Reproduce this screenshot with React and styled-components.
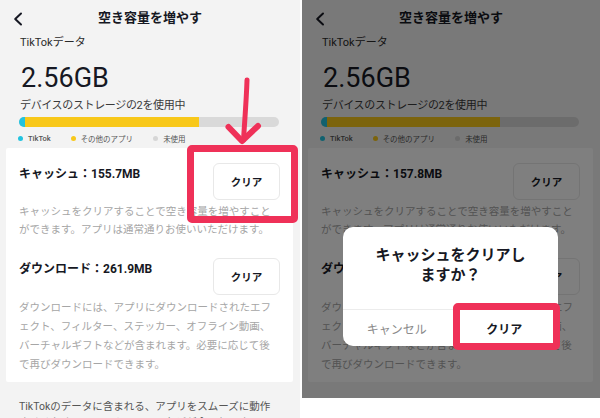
import React from "react";
import styled, { createGlobalStyle } from "styled-components";

const FONT = `Roboto, "Noto Sans CJK JP", sans-serif`;
const RED = "#ef3158";

const Global = createGlobalStyle`
  html, body { margin: 0; padding: 0; background: #fff; }
  body { font-family: ${FONT}; -webkit-font-smoothing: antialiased; }
`;

const Stage = styled.div`
  display: flex;
  align-items: flex-start;
  gap: 2px;
  width: 600px;
  height: 418px;
  overflow: hidden;
  background: #fff;
`;

const Phone = styled.div`
  position: relative;
  flex: none;
  display: flex;
  flex-direction: column;
  width: ${(p) => p.$w}px;
  height: ${(p) => p.$h}px;
  overflow: hidden;
  background: #f3f3f3;
  color: #161823;
  & > * {
    flex-shrink: 0;
  }
`;

const Header = styled.header`
  display: grid;
  grid-template-columns: 40px 1fr 40px;
  align-items: center;
  height: 36px;
`;

const Back = styled.div`
  padding-left: 13px;
  display: flex;
  align-items: center;
  padding-top: 1px;
`;

const Title = styled.h1`
  margin: 0;
  font-size: 13px;
  font-weight: 700;
  text-align: center;
  line-height: 16px;
`;

const Label = styled.div`
  padding: 0 20px;
  font-size: 11px;
  line-height: 14px;
  color: #2a2a2a;
`;

const BigNumber = styled.div`
  margin-top: 15px;
  padding: 0 21px;
  font-size: 27px;
  line-height: 27px;
  font-weight: 400;
  color: #161823;
`;

const Usage = styled.div`
  margin-top: 7px;
  padding: 0 20px;
  font-size: 11px;
  letter-spacing: -0.35px;
  line-height: 14px;
  color: #3a3a3a;
`;

const Bar = styled.div`
  display: flex;
  margin: 4px 21px 0 19px;
  height: 10px;
  border-radius: 5px;
  overflow: hidden;
  background: #d9d9d9;
`;

const Seg = styled.div`
  flex: none;
  height: 100%;
  background: ${(p) => p.$c};
`;

const Legend = styled.div`
  display: flex;
  gap: 20px;
  margin-top: 6px;
  padding: 0 18px;
  height: 10px;
  align-items: center;
`;

const LegendItem = styled.div`
  display: flex;
  align-items: center;
  gap: 5px;
  font-size: 7.5px;
  color: #555;
  font-weight: ${(p) => (p.$bold ? 500 : 400)};
`;

const Dot = styled.span`
  width: 5px;
  height: 5px;
  border-radius: 50%;
  background: ${(p) => p.$c};
`;

const Card = styled.section`
  margin: 5px 7px 0 6px;
  padding: 15px 13px 8px 13px;
  background: #fff;
  border-radius: 2px;
`;

const Row = styled.div`
  display: flex;
  justify-content: space-between;
  align-items: flex-start;
  margin-top: ${(p) => p.$mt || 0}px;
`;

const ItemTitle = styled.div`
  padding-top: 3px;
  font-size: 12px;
  line-height: 16px;
  font-weight: 700;
  color: #161823;
`;

const ClearButton = styled.button`
  width: 67px;
  height: 37px;
  border: 1px solid #e8e8e8;
  border-radius: 6px;
  background: #fff;
  font-family: ${FONT};
  font-size: 10.5px;
  font-weight: 700;
  color: #161823;
  padding: 0;
`;

const Desc = styled.p`
  margin: ${(p) => p.$mt}px 0 0;
  font-size: 10.5px;
  line-height: ${(p) => p.$lh}px;
  color: #a6a6a6;
  white-space: nowrap;
`;

const Footer = styled.p`
  margin: 17px 0 0;
  padding: 0 19px;
  font-size: 10.5px;
  line-height: 16px;
  color: #555;
  white-space: nowrap;
`;

const Overlay = styled.div`
  position: absolute;
  inset: 0;
  background: rgba(0, 0, 0, 0.5);
`;

const Dialog = styled.div`
  position: absolute;
  left: 41px;
  top: 227px;
  width: 215px;
  height: 119px;
  background: #fff;
  border-radius: 10px;
  display: flex;
  flex-direction: column;
`;

const DialogTitle = styled.div`
  flex: 1;
  padding-top: 18px;
  font-size: 15px;
  line-height: 20px;
  font-weight: 700;
  text-align: center;
  color: #161823;
`;

const DialogActions = styled.div`
  display: grid;
  grid-template-columns: 1fr 1fr;
  height: 36px;
  border-top: 1px solid #ececec;
`;

const DialogButton = styled.div`
  display: flex;
  align-items: center;
  justify-content: center;
  font-size: 12px;
  font-weight: ${(p) => (p.$primary ? 700 : 400)};
  color: ${(p) => (p.$primary ? "#161823" : "#8a8a8a")};
`;

const Highlight = styled.div`
  position: absolute;
  left: ${(p) => p.$x}px;
  top: ${(p) => p.$y}px;
  width: ${(p) => p.$w}px;
  height: ${(p) => p.$h}px;
  box-sizing: border-box;
  border: 7px solid ${RED};
  border-radius: 5px;
  pointer-events: none;
`;

const ArrowSvg = styled.svg`
  position: absolute;
  left: 224px;
  top: 76px;
  pointer-events: none;
`;

const Chevron = () => (
  <svg width="10" height="14" viewBox="0 0 10 14">
    <polyline points="8,1.5 2.2,7 8,12.5" fill="none" stroke="#161823" strokeWidth="2" strokeLinecap="round" strokeLinejoin="round" />
  </svg>
);

const Screen = ({ w, h, cache, children }) => (
  <Phone $w={w} $h={h}>
    <Header>
      <Back>
        <Chevron />
      </Back>
      <Title>空き容量を増やす</Title>
      <span />
    </Header>
    <Label>TikTokデータ</Label>
    <BigNumber>2.56GB</BigNumber>
    <Usage>デバイスのストレージの2を使用中</Usage>
    <Bar>
      <Seg $c="#22c3df" style={{ width: "2.4%" }} />
      <Seg $c="#f8c81a" style={{ width: "66.9%" }} />
    </Bar>
    <Legend>
      <LegendItem $bold>
        <Dot $c="#22c3df" />
        TikTok
      </LegendItem>
      <LegendItem>
        <Dot $c="#f8c81a" />
        その他のアプリ
      </LegendItem>
      <LegendItem>
        <Dot $c="#d6d6d6" />
        未使用
      </LegendItem>
    </Legend>
    <Card>
      <Row>
        <ItemTitle>キャッシュ：{cache}</ItemTitle>
        <ClearButton>クリア</ClearButton>
      </Row>
      <Desc $mt={3} $lh={18}>
        キャッシュをクリアすることで空き容量を増やすこと
        <br />
        ができます。アプリは通常通りお使いいただけます。
      </Desc>
      <Row $mt={19}>
        <ItemTitle>ダウンロード：261.9MB</ItemTitle>
        <ClearButton>クリア</ClearButton>
      </Row>
      <Desc $mt={3} $lh={19}>
        ダウンロードには、アプリにダウンロードされたエフ
        <br />
        ェクト、フィルター、ステッカー、オフライン動画、
        <br />
        バーチャルギフトなどが含まれます。必要に応じて後
        <br />
        で再びダウンロードできます。
      </Desc>
    </Card>
    <Footer>
      TikTokのデータに含まれる、アプリをスムーズに動作
      <br />
      させるためのシステムファイルなどが含まれます。
    </Footer>
    {children}
  </Phone>
);

export default function App() {
  return (
    <>
      <Global />
      <Stage>
        <Screen w={300} h={418} cache="155.7MB">
          <ArrowSvg width="40" height="72" viewBox="0 0 40 72">
            <path d="M23 4 C22.5 22 21 40 19.5 64" fill="none" stroke={RED} strokeWidth="5" strokeLinecap="round" />
            <path d="M4.5 51 L18 65 L34 50" fill="none" stroke={RED} strokeWidth="6" strokeLinecap="round" strokeLinejoin="round" />
          </ArrowSvg>
          <Highlight $x={187} $y={145} $w={111} $h={78} />
        </Screen>
        <Screen w={298} h={398} cache="157.8MB">
          <Overlay>
            <Dialog>
              <DialogTitle>
                キャッシュをクリアし
                <br />
                ますか？
              </DialogTitle>
              <DialogActions>
                <DialogButton>キャンセル</DialogButton>
                <DialogButton $primary>クリア</DialogButton>
              </DialogActions>
              <Highlight $x={110} $y={76} $w={107} $h={47} />
            </Dialog>
          </Overlay>
        </Screen>
      </Stage>
    </>
  );
}
